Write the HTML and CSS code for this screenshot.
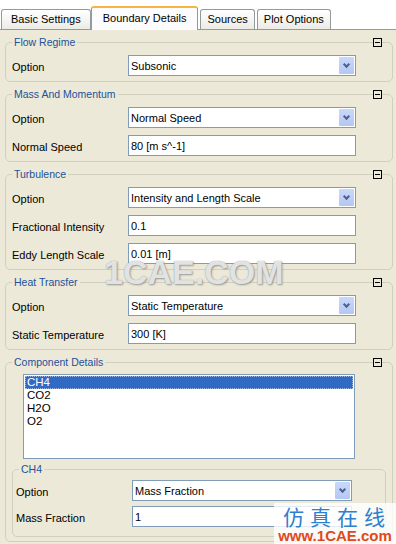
FILE: index.html
```html
<!DOCTYPE html>
<html lang="en">
<head>
  <meta charset="UTF-8">
  <title>Boundary Details</title>
  <link rel="stylesheet" href="styles.css">
</head>
<body>
  <div class="page">
    <!-- Tab strip -->
    <div class="tabs">
      <div class="tab first">Basic Settings</div>
      <div class="tab active">Boundary Details</div>
      <div class="tab">Sources</div>
      <div class="tab">Plot Options</div>
    </div>

    <div class="panel">
      <fieldset class="group">
        <legend>Flow Regime</legend>
        <span class="collapse"></span>
        <div class="row">
          <label>Option</label>
          <div class="combo"><span>Subsonic</span><i class="drop"></i></div>
        </div>
      </fieldset>

      <fieldset class="group">
        <legend>Mass And Momentum</legend>
        <span class="collapse"></span>
        <div class="row">
          <label>Option</label>
          <div class="combo"><span>Normal Speed</span><i class="drop"></i></div>
        </div>
        <div class="row">
          <label>Normal Speed</label>
          <div class="field">80 [m s^-1]</div>
        </div>
      </fieldset>

      <fieldset class="group">
        <legend>Turbulence</legend>
        <span class="collapse"></span>
        <div class="row">
          <label>Option</label>
          <div class="combo"><span>Intensity and Length Scale</span><i class="drop"></i></div>
        </div>
        <div class="row">
          <label>Fractional Intensity</label>
          <div class="field">0.1</div>
        </div>
        <div class="row">
          <label>Eddy Length Scale</label>
          <div class="field">0.01 [m]</div>
        </div>
      </fieldset>

      <fieldset class="group">
        <legend>Heat Transfer</legend>
        <span class="collapse"></span>
        <div class="row">
          <label>Option</label>
          <div class="combo"><span>Static Temperature</span><i class="drop"></i></div>
        </div>
        <div class="row">
          <label>Static Temperature</label>
          <div class="field">300 [K]</div>
        </div>
      </fieldset>

      <fieldset class="group components">
        <legend>Component Details</legend>
        <span class="collapse"></span>
        <ul class="listbox">
          <li class="selected">CH4</li>
          <li>CO2</li>
          <li>H2O</li>
          <li>O2</li>
        </ul>

        <fieldset class="group sub">
          <legend>CH4</legend>
          <div class="row">
            <label>Option</label>
            <div class="combo"><span>Mass Fraction</span><i class="drop"></i></div>
          </div>
          <div class="row">
            <label>Mass Fraction</label>
            <div class="field">1</div>
          </div>
        </fieldset>
      </fieldset>
    </div>

    <!-- watermarks from the screenshot -->
    <div class="mark-center">1CAE.COM</div>
    <div class="mark-corner">
      <div class="mark-cn">仿真在线</div>
      <div class="mark-url">www.1CAE.com</div>
    </div>
  </div>
</body>
</html>
```

FILE: styles.css
```css
body {
  margin: 0;
  background: #ffffff;
  font-family: "Liberation Sans", Arial, sans-serif;
  font-size: 11px;
  color: #000000;
}

.page {
  position: relative;
  width: 396px;
  height: 544px;
  overflow: hidden;
}

/* tabs */
.tabs {
  display: flex;
  align-items: flex-end;
  height: 29px;
  padding-left: 1px;
}

.tab {
  height: 19px;
  line-height: 19px;
  padding: 0 6px;
  margin-right: 2px;
  border: 1px solid #919b9c;
  border-bottom: none;
  border-radius: 3px 3px 0 0;
  background: linear-gradient(#ffffff, #ecebe5);
  font-size: 11px;
}

.tab.first {
  padding: 0 9px;
}

.tab.active {
  height: 22px;
  line-height: 21px;
  padding: 0 11px;
  margin: 0 2px 0 -2px;
  border-top: 2px solid #f6b543;
  background: #fcfcfe;
  position: relative;
  top: 1px;
}

.panel {
  background: #ece9d8;
  border-top: 1px solid #919b9c;
  height: 514px;
  padding: 6px 3px 0 5px;
}

/* group boxes */
.group {
  position: relative;
  margin: 0 0 6px 0;
  padding: 6px 5px 4px 6px;
  border: 1px solid #d0d0bf;
  border-radius: 5px;
}

.group legend {
  padding: 0 2px;
  margin-left: 0;
  color: #22519b;
  line-height: 13px;
  font-size: 10.5px;
}

.collapse {
  position: absolute;
  top: -11px;
  right: 10px;
  width: 7px;
  height: 7px;
  border: 1px solid #000000;
  background: #ece9d8;
}

.collapse::after {
  content: "";
  position: absolute;
  left: 1px;
  top: 3px;
  width: 5px;
  height: 1px;
  background: #000000;
}

.row {
  display: grid;
  grid-template-columns: 116px 228px;
  align-items: center;
  height: 21px;
  margin-bottom: 7px;
}

.row:last-of-type {
  margin-bottom: 1px;
}

.row label {
  font-size: 11px;
  padding-top: 2px;
}

.combo,
.field {
  height: 19px;
  border: 1px solid #7f9db9;
  background: #ffffff;
  display: flex;
  align-items: center;
  padding-left: 2px;
  font-size: 11px;
}

.combo span {
  flex: 1;
}

.drop {
  width: 15px;
  height: 17px;
  margin-right: 1px;
  border-radius: 1px;
  background: linear-gradient(#c9d8fc, #b4c7f4);
  position: relative;
}

.drop::after {
  content: "";
  position: absolute;
  left: 5px;
  top: 5px;
  width: 3px;
  height: 3px;
  border-right: 2px solid #4d6185;
  border-bottom: 2px solid #4d6185;
  transform: rotate(45deg);
}

/* component list */
.components {
  padding: 5px 6px 4px 17px;
}

.components > legend {
  margin-left: -11px;
}

.listbox {
  list-style: none;
  margin: 0 31px 0 0;
  padding: 1px;
  height: 81px;
  border: 1px solid #7f9db9;
  background: #ffffff;
}

.listbox li {
  height: 13px;
  line-height: 13px;
  padding-left: 2px;
  font-size: 11.5px;
}

.listbox li.selected {
  background: #316ac5;
  color: #ffffff;
  outline: 1px dotted #9fb8e0;
  outline-offset: -1px;
}

.group.sub {
  margin: 4px 0 0 -11px;
  padding: 4px 3px 4px 3px;
}

.sub .row {
  grid-template-columns: 116px 220px;
  margin-bottom: 5px;
}

.sub legend {
  margin-left: 3px;
}

/* watermarks */
.mark-center {
  position: absolute;
  left: 104px;
  top: 253px;
  font-size: 34px;
  font-weight: bold;
  color: rgba(255, 255, 255, 0.75);
  text-shadow: 0 0 1px #8c8c8c, 1px 1px 2px #9a9a9a;
}

.mark-corner {
  position: absolute;
  left: 274px;
  top: 503px;
  width: 122px;
  height: 41px;
  background: rgba(255, 255, 255, 0.8);
  text-align: center;
}

.mark-cn {
  font-family: "Noto Sans CJK SC", sans-serif;
  font-size: 21px;
  line-height: 26px;
  letter-spacing: 6px;
  color: #2d7fd0;
  padding-left: 4px;
}

.mark-url {
  font-size: 15px;
  font-weight: bold;
  line-height: 14px;
  color: #e0481c;
}
```
